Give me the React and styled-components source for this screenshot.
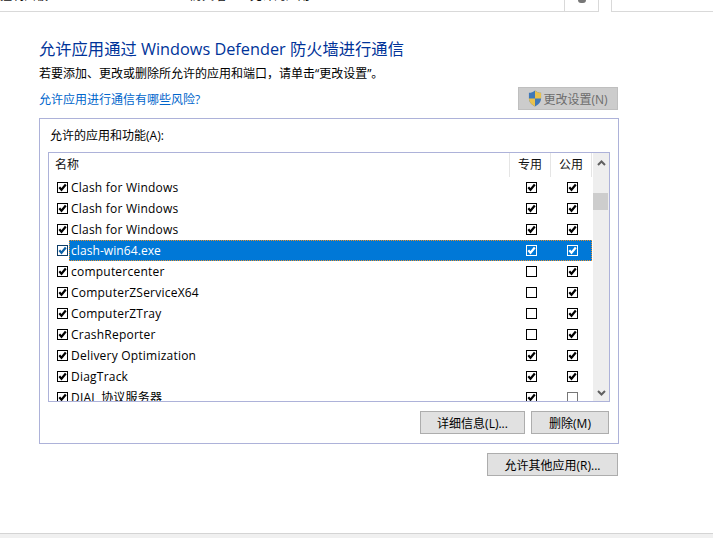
import React from "react";
import styled, { createGlobalStyle } from "styled-components";

const Global = createGlobalStyle`
  html, body { margin: 0; padding: 0; background: #fff; }
  body { width: 713px; height: 538px; overflow: hidden; font-family: "Noto Sans CJK SC", "Open Sans", sans-serif; }
  * { box-sizing: border-box; }
`;
const Page = styled.div`
  width: 713px; height: 538px; display: flex; flex-direction: column; color: #000; overflow: hidden;
  font-family: "Open Sans", "Noto Sans CJK SC", sans-serif; font-size: 12px;
`;
const TopBar = styled.div`display: flex; height: 12px; flex: none;`;
const AddressBox = styled.div`
  width: 599px; border-right: 1px solid #d9d9d9; border-bottom: 1px solid #d9d9d9;
  display: flex; justify-content: flex-end; position: relative; overflow: hidden;
`;
const CutText = styled.span`
  position: absolute; top: -11px; left: ${p => p.$x}px; font-size: 12px; line-height: 14px; white-space: nowrap; color: #111;
`;
const RefreshCell = styled.div`width: 34px; border-left: 1px solid #d9d9d9; display: flex; justify-content: center;`;
const RefreshDot = styled.div`width: 8px; height: 3px; background: #777; border-radius: 0 0 4px 4px;`;
const SearchBox = styled.div`flex: 1; margin-left: 12px; border-left: 1px solid #d9d9d9; border-bottom: 1px solid #d9d9d9;`;
const Content = styled.div`flex: 1; padding: 26px 95px 0 39px; display: flex; flex-direction: column;`;
const Title = styled.h1`margin: 0; font-weight: 400; font-size: 16.3px; line-height: 22px; color: #003399; white-space: nowrap;`;
const Sub = styled.div`margin-top: 5px; font-size: 12px; line-height: 17px; white-space: nowrap;`;
const LinkRow = styled.div`margin-top: 5px; display: flex; justify-content: space-between; align-items: center; height: 23px;`;
const HelpLink = styled.span`color: #0066cc; font-size: 12px; line-height: 17px; padding-top: 1px;`;
const Button = styled.button`
  height: 23px; width: ${p => p.$w}px; flex: none; background: #e1e1e1; border: 1px solid #adadad; padding: 0; margin: 0;
  font: inherit; font-size: 12px; color: #000; display: flex; align-items: center; justify-content: center; white-space: nowrap;
`;
const ShieldButton = styled(Button)`background: #cccccc; border-color: #bfbfbf; color: #6d6d6d; gap: 1px;`;
const Group = styled.div`margin-top: 8px; width: 580px; height: 326px; border: 1px solid #adb2d9; padding: 0 0 0 8px; display: flex; flex-direction: column;`;
const GroupLabel = styled.div`height: 33px; padding: 2px 0 0 2px; line-height: 30px; font-size: 12px;`;
const ListBox = styled.div`
  width: 562px; height: 250px; flex: none; border: 1px solid #adb2d9; display: flex; overflow: hidden;
`;
const Table = styled.div`width: 544px; flex: none; overflow: hidden;`;
const Header = styled.div`display: grid; grid-template-columns: 461px 41px 41px; height: 24px;`;
const HeadCell = styled.div`
  height: 24px; line-height: 24px; border-right: 1px solid #e5e5e5; padding-left: ${p => p.$left || 0}px;
  text-align: ${p => p.$left ? "left" : "center"}; color: #111;
`;
const Row = styled.div`display: grid; grid-template-columns: 461px 41px 41px; height: 21px; align-items: center; position: relative;`;
const NameCell = styled.div`display: flex; align-items: center; padding-left: 8px; height: 21px; min-width: 0; position: relative;`;
const Name = styled.span`
  font-size: 12px; flex: 1; height: 19px; line-height: 19px; white-space: nowrap; margin-left: 3px;
  letter-spacing: ${p => p.$sel ? ".08px" : ".22px"}; color: ${p => p.$sel ? "#fff" : "#000"};
`;
const SelBar = styled.div`
  position: absolute; left: 20px; top: 0; width: 523px; height: 21px; background: #0078d7; outline: 1px dotted #e8912d; outline-offset: -1px;
`;
const MarkCell = styled.div`display: flex; justify-content: center; align-items: center; position: relative; padding-left: 2px;`;
const Box = styled.span`
  width: 11px; height: 11px; flex: none; border: 1px solid ${p => p.$border};
  display: inline-flex; align-items: center; justify-content: center; background: ${p => p.$fill}; position: relative;
`;
const Scrollbar = styled.div`flex: 1; background: #eeeeee; position: relative;`;
const Arrow = styled.svg`position: absolute; ${p => p.$pos}; left: 4px; width: 9px; height: 6px;`;
const Thumb = styled.div`position: absolute; top: 40px; left: 0; width: 15px; height: 17px; background: #cdcdcd;`;
const Actions = styled.div`display: flex; justify-content: flex-end; gap: 6px; margin-top: 9px; padding-right: 9px;`;
const Bottom = styled.div`display: flex; justify-content: flex-end; margin-top: 9px; width: 579px;`;
const Footer = styled.div`height: 5px; flex: none; background: #f0f0f0; border-top: 1px solid #d4d4d4;`;

const Mark = ({ on, variant = "plain" }) => {
  const look = {
    plain: { border: "#000", fill: "#fff", stroke: "#000" },
    muted: { border: "#777", fill: "#fff", stroke: "#000" },
    onBlue: { border: "#fff", fill: "transparent", stroke: "#fff" },
    focus: { border: "#0d3c66", fill: "#fff", stroke: "#0b5fa5" },
  }[variant];
  return (
    <Box $border={look.border} $fill={look.fill}>
      {on && (
        <svg width="9" height="9" viewBox="0 0 9 9">
          <path d="M1.3 4.2 L3.5 6.7 L7.8 1.5" fill="none" stroke={look.stroke} strokeWidth="2.2" />
        </svg>
      )}
    </Box>
  );
};

const rows = [
  ["Clash for Windows", 1, 1],
  ["Clash for Windows", 1, 1],
  ["Clash for Windows", 1, 1],
  ["clash-win64.exe", 1, 1, true],
  ["computercenter", 0, 1],
  ["ComputerZServiceX64", 0, 1],
  ["ComputerZTray", 0, 1],
  ["CrashReporter", 0, 1],
  ["Delivery Optimization", 1, 1],
  ["DiagTrack", 1, 1],
  ["DIAL 协议服务器", 1, 0],
];

const Shield = () => (
  <svg width="14" height="17" viewBox="0 0 15 16" preserveAspectRatio="none">
    <path d="M7.5 .5 C5.5 2 3.5 2.6 1 2.7 V8 C1 11.5 4 14 7.5 15.5 C11 14 14 11.5 14 8 V2.7 C11.5 2.6 9.5 2 7.5 .5Z" fill="#3f78b8" />
    <path d="M7.5 .5 C9.5 2 11.5 2.6 14 2.7 V8 H7.5Z" fill="#e8c14e" />
    <path d="M7.5 8 H1 C1 11.5 4 14 7.5 15.5Z" fill="#e8c14e" />
  </svg>
);

export default function App() {
  return (
    <Page>
      <Global />
      <TopBar>
        <AddressBox>
          <CutText $x={0}>控制面板</CutText>
          <CutText $x={190}>防火墙</CutText>
          <CutText $x={250}>允许的应用</CutText>
          <RefreshCell><RefreshDot /></RefreshCell>
        </AddressBox>
        <SearchBox />
      </TopBar>
      <Content>
        <Title>允许应用通过 Windows Defender 防火墙进行通信</Title>
        <Sub>若要添加、更改或删除所允许的应用和端口，请单击“更改设置”。</Sub>
        <LinkRow>
          <HelpLink>允许应用进行通信有哪些风险?</HelpLink>
          <ShieldButton $w={100} disabled><Shield />更改设置(N)</ShieldButton>
        </LinkRow>
        <Group>
          <GroupLabel>允许的应用和功能(A):</GroupLabel>
          <ListBox>
            <Table>
              <Header>
                <HeadCell $left={6}>名称</HeadCell>
                <HeadCell>专用</HeadCell>
                <HeadCell>公用</HeadCell>
              </Header>
              {rows.map(([n, a, b, sel], i) => (
                <Row key={i}>
                  {sel && <SelBar />}
                  <NameCell>
                    <Mark on variant={sel ? "focus" : "plain"} />
                    <Name $sel={sel}>{n}</Name>
                  </NameCell>
                  <MarkCell><Mark on={!!a} variant={sel ? "onBlue" : "plain"} /></MarkCell>
                  <MarkCell><Mark on={!!b} variant={sel ? "onBlue" : b ? "plain" : "muted"} /></MarkCell>
                </Row>
              ))}
            </Table>
            <Scrollbar>
              <Arrow $pos="top: 7px" viewBox="0 0 9 6"><path d="M1 5 L4.5 1.5 L8 5" fill="none" stroke="#606060" strokeWidth="2" /></Arrow>
              <Thumb />
              <Arrow $pos="bottom: 5px" viewBox="0 0 9 6"><path d="M1 1 L4.5 4.5 L8 1" fill="none" stroke="#606060" strokeWidth="2" /></Arrow>
            </Scrollbar>
          </ListBox>
          <Actions>
            <Button $w={105}>详细信息(L)...</Button>
            <Button $w={78}>删除(M)</Button>
          </Actions>
        </Group>
        <Bottom><Button $w={131}>允许其他应用(R)...</Button></Bottom>
      </Content>
      <Footer />
    </Page>
  );
}
